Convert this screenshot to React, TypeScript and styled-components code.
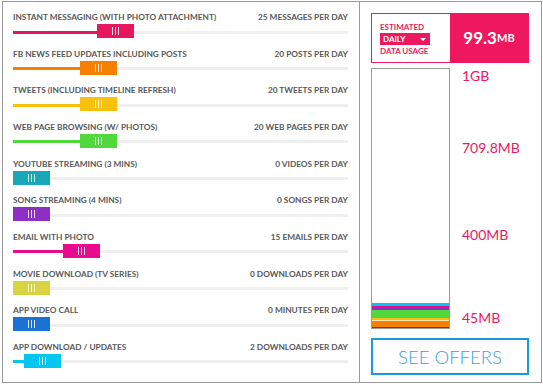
import React from "react";
import styled, { createGlobalStyle } from "styled-components";

const GlobalStyle = createGlobalStyle`
  html, body { margin: 0; padding: 0; background: #fff; }
  body { font-family: Lato, "Open Sans", sans-serif; }
`;

const Frame = styled.div`
  box-sizing: border-box;
  margin: 1px 0 0 2px;
  width: 540px;
  height: 382px;
  border: 1px solid #9a9a9a;
  display: flex;
`;

const LeftCol = styled.div`
  box-sizing: border-box;
  width: 357px;
  border-right: 1px solid #9a9a9a;
  padding: 9px 11px 0 10px;
  display: flex;
  flex-direction: column;
`;

const Row = styled.div`
  height: 36.67px;
  flex: none;
`;

const LabelLine = styled.div`
  display: flex;
  justify-content: space-between;
  font-size: 8.3px;
  line-height: 12px;
  font-weight: 700;
  color: #585858;
  text-transform: uppercase;
  white-space: nowrap;
`;

const Slider = styled.div`
  display: flex;
  align-items: center;
  height: 14px;
  margin-top: 1px;
`;

const Fill = styled.div<{ $color: string; $w: number }>`
  flex: none;
  width: ${(p) => p.$w}px;
  height: 3px;
  margin-top: 2px;
  background: ${(p) => p.$color};
`;

const Track = styled.div`
  flex: 1;
  height: 3px;
  margin-top: 2px;
  background: #efefef;
`;

const Thumb = styled.div<{ $color: string }>`
  flex: none;
  width: 37px;
  height: 14px;
  background: ${(p) => p.$color};
  display: flex;
  align-items: center;
  justify-content: center;
  gap: 2px;
`;

const Grip = styled.span`
  width: 1px;
  height: 8px;
  background: rgba(255, 255, 255, 0.85);
`;

const RightCol = styled.div`
  flex: 1;
  padding: 11px 12px 0 11px;
  display: flex;
  flex-direction: column;
`;

const EstimateBox = styled.div`
  box-sizing: border-box;
  height: 50px;
  border: 1px solid #ee1760;
  display: flex;
`;

const EstimateLeft = styled.div`
  width: 78px;
  padding: 9px 0 0 8px;
  box-sizing: border-box;
  display: flex;
  flex-direction: column;
  font-size: 8px;
  font-weight: 700;
  color: #ee1760;
  line-height: 9px;
`;

const Select = styled.div`
  margin: 1px 0 2px;
  width: 50px;
  height: 12px;
  background: #ee1760;
  color: #fff;
  box-sizing: border-box;
  padding: 0 4px 0 3px;
  display: flex;
  align-items: center;
  justify-content: space-between;
  line-height: 12px;
`;

const Caret = styled.span`
  width: 0;
  height: 0;
  border-left: 3px solid transparent;
  border-right: 3px solid transparent;
  border-top: 3px solid #fff;
`;

const EstimateValue = styled.div`
  flex: 1;
  background: #ee1760;
  color: #fff;
  font-weight: 700;
  font-size: 17px;
  display: flex;
  align-items: center;
  justify-content: center;
  padding-bottom: 1px;
`;

const Unit = styled.span`
  font-size: 11px;
`;

const ChartRow = styled.div`
  margin-top: 5px;
  height: 261px;
  display: flex;
  gap: 12px;
`;

const Bar = styled.div`
  box-sizing: border-box;
  width: 79px;
  border: 1px solid #9a9a9a;
  display: flex;
  flex-direction: column;
  justify-content: flex-end;
`;

const Stripe = styled.div<{ $color: string; $h: number }>`
  height: ${(p) => p.$h}px;
  background: ${(p) => p.$color};
`;

const Axis = styled.div`
  position: relative;
  flex: 1;
`;

const AxisLabel = styled.div<{ $top: number }>`
  position: absolute;
  left: 0;
  top: ${(p) => p.$top}px;
  font-size: 14px;
  line-height: 14px;
  color: #ee1760;
  white-space: nowrap;
`;

const OffersButton = styled.button`
  margin-top: 9px;
  height: 37px;
  box-sizing: border-box;
  border: 2px solid #1a9ad6;
  background: #fff;
  color: #3b9fdc;
  font-family: Lato, sans-serif;
  font-weight: 300;
  font-size: 18.5px;
  padding: 0;
  cursor: pointer;
`;

const rows = [
  { label: "Instant messaging (with photo attachment)", value: "25 messages per day", color: "#e8175d", pos: 84 },
  { label: "FB news feed updates including posts", value: "20 posts per day", color: "#f77f00", pos: 67 },
  { label: "Tweets (including timeline refresh)", value: "20 tweets per day", color: "#f9c10c", pos: 67 },
  { label: "Web page browsing (w/ photos)", value: "20 web pages per day", color: "#50d83c", pos: 67 },
  { label: "Youtube streaming (3 mins)", value: "0 videos per day", color: "#17a8b8", pos: 0 },
  { label: "Song streaming (4 mins)", value: "0 songs per day", color: "#8e2fc4", pos: 0 },
  { label: "Email with photo", value: "15 emails per day", color: "#ea0a8c", pos: 50 },
  { label: "Movie download (TV series)", value: "0 downloads per day", color: "#d8d340", pos: 0 },
  { label: "App video call", value: "0 minutes per day", color: "#1a73d4", pos: 0 },
  { label: "App download / updates", value: "2 downloads per day", color: "#00c6f0", pos: 11 },
];

const stripes = [
  { color: "#00c6f0", h: 3 },
  { color: "#ea0a8c", h: 2 },
  { color: "#8e2fc4", h: 2 },
  { color: "#50d83c", h: 8 },
  { color: "#f9c10c", h: 2 },
  { color: "#fde7b0", h: 1 },
  { color: "#f77f00", h: 6 },
  { color: "#c8102e", h: 1 },
];

const axis = [
  { text: "1GB", top: 1 },
  { text: "709.8MB", top: 73 },
  { text: "400MB", top: 160 },
  { text: "45MB", top: 243 },
];

export default function App() {
  return (
    <>
      <GlobalStyle />
      <Frame>
        <LeftCol>
          {rows.map((r) => (
            <Row key={r.label}>
              <LabelLine>
                <span>{r.label}</span>
                <span>{r.value}</span>
              </LabelLine>
              <Slider>
                <Fill $color={r.color} $w={r.pos} />
                <Thumb $color={r.color}>
                  <Grip />
                  <Grip />
                  <Grip />
                </Thumb>
                <Track />
              </Slider>
            </Row>
          ))}
        </LeftCol>
        <RightCol>
          <EstimateBox>
            <EstimateLeft>
              <span>ESTIMATED</span>
              <Select>
                <span>DAILY</span>
                <Caret />
              </Select>
              <span>DATA USAGE</span>
            </EstimateLeft>
            <EstimateValue>
              99.3<Unit>MB</Unit>
            </EstimateValue>
          </EstimateBox>
          <ChartRow>
            <Bar>
              {stripes.map((s, i) => (
                <Stripe key={i} $color={s.color} $h={s.h} />
              ))}
            </Bar>
            <Axis>
              {axis.map((a) => (
                <AxisLabel key={a.text} $top={a.top}>
                  {a.text}
                </AxisLabel>
              ))}
            </Axis>
          </ChartRow>
          <OffersButton>SEE OFFERS</OffersButton>
        </RightCol>
      </Frame>
    </>
  );
}
